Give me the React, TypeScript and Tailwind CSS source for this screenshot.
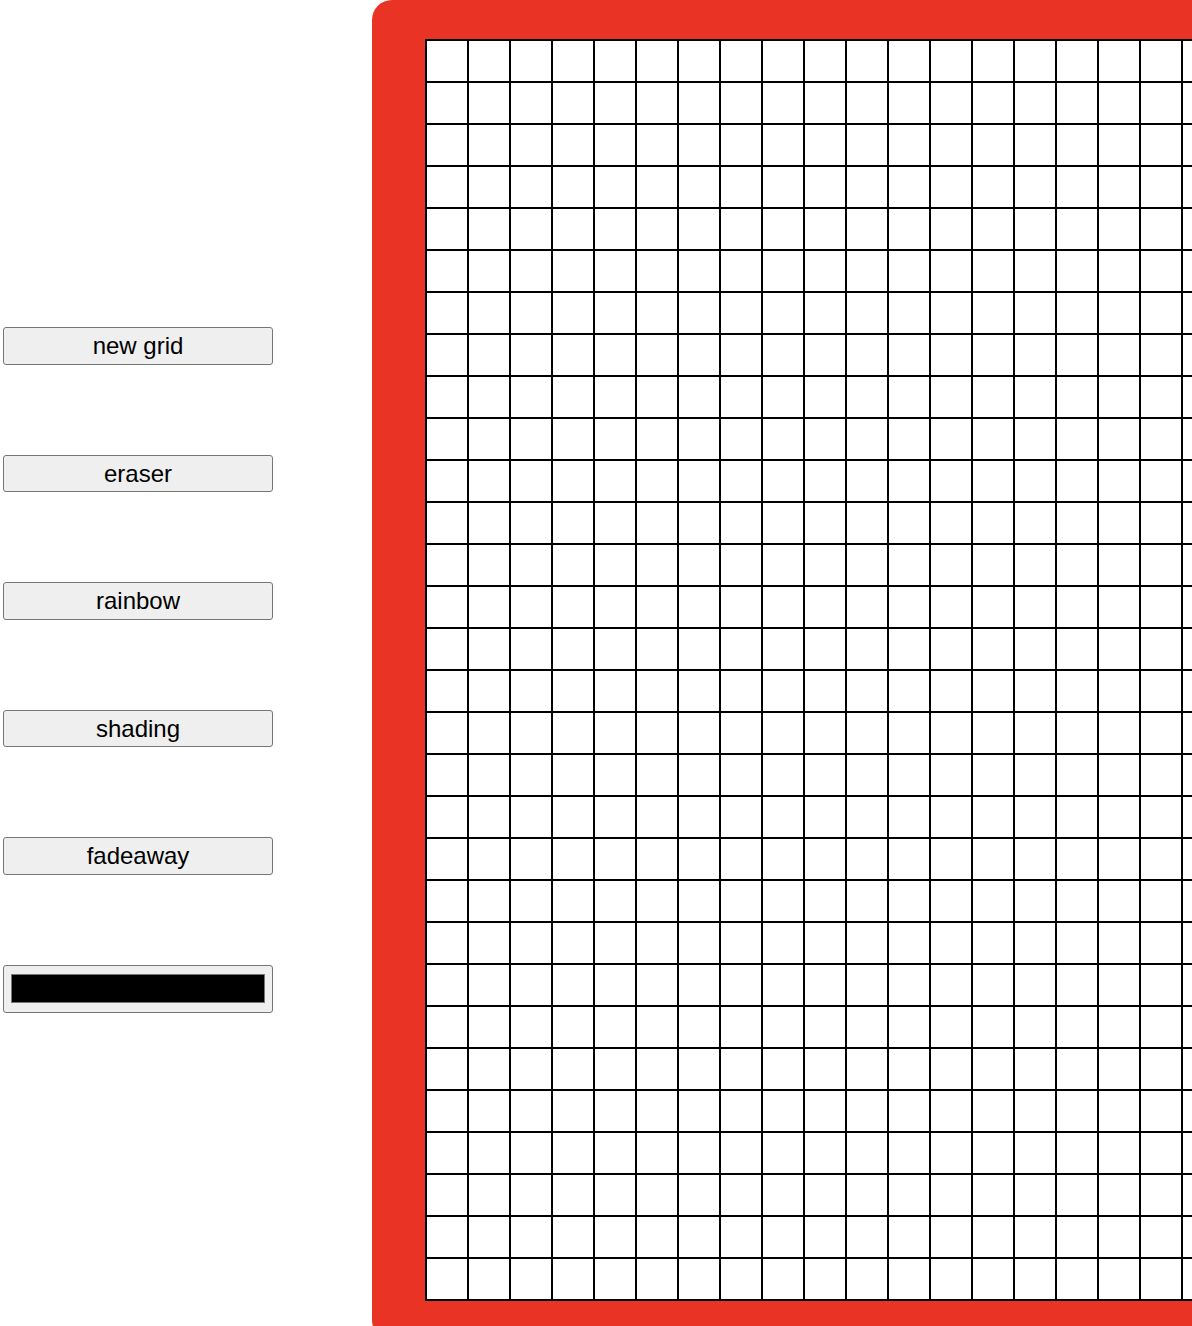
import { useState } from "react";

const SIZE = 30;

function ToolButton({ label, onClick }: { label: string; onClick?: () => void }) {
  return (
    <button
      type="button"
      onClick={onClick}
      className="flex h-[37.5px] w-[270px] items-center justify-center rounded-[3px] border border-[#767676] bg-[#efefef] text-[24px] leading-none text-black"
    >
      {label}
    </button>
  );
}

export default function App() {
  const [color] = useState("#000000");
  const cells = Array.from({ length: SIZE * SIZE }, (_, i) => i);

  return (
    <div
      className="h-[1326px] w-[1192px] overflow-hidden bg-white"
      style={{ fontFamily: '"Liberation Sans", Arial, sans-serif' }}
    >
      <div className="flex h-[1340px] w-max items-stretch">
        <div className="flex w-[273px] shrink-0 flex-col justify-center gap-[90px] pl-[3px]">
          <ToolButton label="new grid" />
          <ToolButton label="eraser" />
          <ToolButton label="rainbow" />
          <ToolButton label="shading" />
          <ToolButton label="fadeaway" />
          <div className="flex h-[48px] w-[270px] items-center justify-center rounded-[3px] border border-[#767676] bg-[#efefef]">
            <div className="h-[29px] w-[254px] border border-[#777777]" style={{ backgroundColor: color }} />
          </div>
        </div>

        <div className="ml-[99px] shrink-0 rounded-[20px] bg-[#e93425] pb-[39px] pl-[53px] pr-[53px] pt-[39px]">
          <div className="grid grid-cols-[repeat(30,42px)] border border-black bg-white">
            {cells.map((i) => (
              <div key={i} className="h-[42px] w-[42px] border border-black" />
            ))}
          </div>
        </div>
      </div>
    </div>
  );
}
